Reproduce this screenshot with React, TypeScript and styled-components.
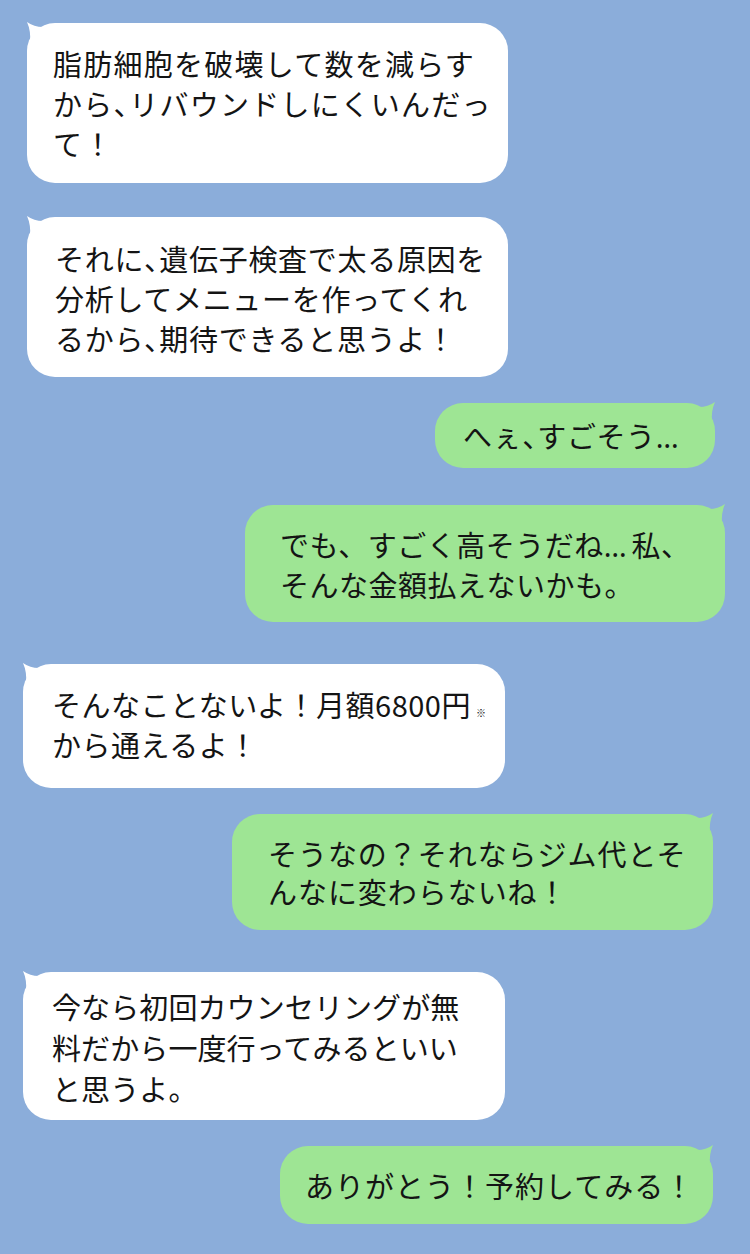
import React from "react";
import styled, { createGlobalStyle } from "styled-components";

const GlobalStyle = createGlobalStyle`
  html, body {
    margin: 0;
    padding: 0;
    background: #8badda;
  }
  body {
    font-family: "Noto Sans CJK JP", "Noto Sans", sans-serif;
  }
`;

type Side = "left" | "right";

const Screen = styled.main`
  width: 750px;
  height: 1254px;
  box-sizing: border-box;
  padding-top: 23px;
  background: #8badda;
  display: flex;
  flex-direction: column;
  overflow: hidden;
`;

const Row = styled.div<{ $side: Side; $inset: number; $gap: number }>`
  display: flex;
  justify-content: ${(p) => (p.$side === "left" ? "flex-start" : "flex-end")};
  padding-left: ${(p) => (p.$side === "left" ? p.$inset : 0)}px;
  padding-right: ${(p) => (p.$side === "right" ? p.$inset : 0)}px;
  margin-top: ${(p) => p.$gap}px;
`;

const Bubble = styled.div<{
  $side: Side;
  $width: number;
  $pt: number;
  $pb: number;
  $pl: number;
  $lh: number;
  $ls: number;
}>`
  position: relative;
  box-sizing: border-box;
  width: ${(p) => p.$width}px;
  padding: ${(p) => `${p.$pt}px 0 ${p.$pb}px ${p.$pl}px`};
  background: ${(p) => (p.$side === "left" ? "#ffffff" : "#9ee594")};
  border-radius: 28px;
  color: #141414;
  font-family: "Noto Sans CJK JP", "Noto Sans", sans-serif;
  font-size: 29px;
  line-height: ${(p) => p.$lh}px;
  letter-spacing: ${(p) => p.$ls}px;
  white-space: nowrap;
`;

const Tail = styled.svg<{ $side: Side }>`
  position: absolute;
  top: -1px;
  ${(p) => (p.$side === "left" ? "left: -1px;" : "right: -1px;")}
  width: 18px;
  height: 20px;
  overflow: visible;
`;

const Line = styled.span`
  display: block;
`;

const Halt = styled.span`
  font-feature-settings: "halt" 1;
`;

const Dots = styled.span`
  display: inline-block;
  font-family: "Noto Sans", sans-serif;
  line-height: 1;
  letter-spacing: 5px;
`;

const Note = styled.span`
  font-size: 10px;
  line-height: 1;
  margin-left: 5px;
  letter-spacing: 0;
`;

type Msg = {
  side: Side;
  inset: number;
  gap: number;
  width: number;
  pt: number;
  pb: number;
  pl: number;
  lh: number;
  ls: number;
  lines: React.ReactNode[];
};

const C = () => <Halt>、</Halt>;

const messages: Msg[] = [
  {
    side: "left",
    inset: 27,
    gap: 0,
    width: 481,
    pt: 20,
    pb: 20,
    pl: 26,
    lh: 40,
    ls: 1.25,
    lines: [
      "脂肪細胞を破壊して数を減らす",
      <>から<C />リバウンドしにくいんだっ</>,
      "て！",
    ],
  },
  {
    side: "left",
    inset: 27,
    gap: 34,
    width: 481,
    pt: 21,
    pb: 19,
    pl: 28,
    lh: 40,
    ls: 0.7,
    lines: [
      <>それに<C />遺伝子検査で太る原因を</>,
      "分析してメニューを作ってくれ",
      <>るから<C />期待できると思うよ！</>,
    ],
  },
  {
    side: "right",
    inset: 35,
    gap: 26,
    width: 280,
    pt: 12,
    pb: 13,
    pl: 28,
    lh: 40,
    ls: 0.6,
    lines: [<>へぇ<C />すごそう<Dots>…</Dots></>],
  },
  {
    side: "right",
    inset: 25,
    gap: 37,
    width: 480,
    pt: 19,
    pb: 18,
    pl: 35,
    lh: 40,
    ls: 0.5,
    lines: [<>でも、すごく高そうだね<Dots>…</Dots>私、</>, "そんな金額払えないかも。"],
  },
  {
    side: "left",
    inset: 23,
    gap: 42,
    width: 482,
    pt: 20,
    pb: 24,
    pl: 29,
    lh: 40,
    ls: 0.5,
    lines: [<>そんなことないよ！月額6800円<Note>※</Note></>, "から通えるよ！"],
  },
  {
    side: "right",
    inset: 37,
    gap: 26,
    width: 481,
    pt: 20,
    pb: 20,
    pl: 36,
    lh: 38,
    ls: 0.95,
    lines: ["そうなの？それならジム代とそ", "んなに変わらないね！"],
  },
  {
    side: "left",
    inset: 23,
    gap: 42,
    width: 482,
    pt: 14,
    pb: 11,
    pl: 29,
    lh: 41,
    ls: 0.1,
    lines: ["今なら初回カウンセリングが無", "料だから一度行ってみるといい", "と思うよ。"],
  },
  {
    side: "right",
    inset: 37,
    gap: 26,
    width: 433,
    pt: 19,
    pb: 19,
    pl: 25,
    lh: 40,
    ls: 1.0,
    lines: ["ありがとう！予約してみる！"],
  },
];

const TailShape: React.FC<{ side: Side; color: string }> = ({ side, color }) => (
  <Tail $side={side} viewBox="0 0 18 20" aria-hidden="true">
    {side === "left" ? (
      <path d="M1 0 Q8 5 17 5 L17 20 L4 20 Q5 9 1 0 Z" fill={color} />
    ) : (
      <path d="M17 0 Q10 5 1 5 L1 20 L14 20 Q13 9 17 0 Z" fill={color} />
    )}
  </Tail>
);

export default function App() {
  return (
    <>
      <GlobalStyle />
      <Screen>
        {messages.map((m, i) => (
          <Row key={i} $side={m.side} $inset={m.inset} $gap={m.gap}>
            <Bubble
              $side={m.side}
              $width={m.width}
              $pt={m.pt}
              $pb={m.pb}
              $pl={m.pl}
              $lh={m.lh}
              $ls={m.ls}
            >
              <TailShape side={m.side} color={m.side === "left" ? "#ffffff" : "#9ee594"} />
              {m.lines.map((l, j) => (
                <Line key={j}>{l}</Line>
              ))}
            </Bubble>
          </Row>
        ))}
      </Screen>
    </>
  );
}
